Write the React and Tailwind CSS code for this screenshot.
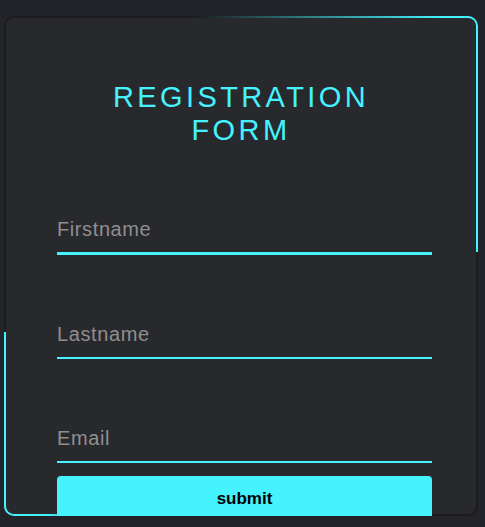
import React from 'react'

const fields = [
  { name: 'firstname', placeholder: 'Firstname', type: 'text', line: 'border-b-[3px] h-[47px]' },
  { name: 'lastname', placeholder: 'Lastname', type: 'text', line: 'border-b-2 h-[46px]' },
  { name: 'email', placeholder: 'Email', type: 'email', line: 'border-b-2 h-[46px]' },
]

const App = () => {
  return (
    <div className="min-h-[527px] bg-[#23242a] pt-[16px] pl-[4px] font-['Liberation_Sans',Arial,sans-serif]">
      <div className="relative w-[474px] h-[500px] rounded-[10px] bg-[#1c1c1c] overflow-hidden p-[2px]">
        {/* animated border beams, frozen */}
        <div className="absolute top-0 right-0 left-[190px] h-[236px] bg-[linear-gradient(90deg,transparent,#45f3ff_88%)]" />
        <div className="absolute bottom-0 left-0 w-[62px] h-[184px] bg-[linear-gradient(90deg,#45f3ff_70%,#33c4cf)]" />

        <form className="relative z-10 h-full rounded-[8px] bg-[#28292d] flex flex-col">
          <h2 className="mt-[63px] text-center text-[29px] leading-[33px] tracking-[3.4px] text-[#45f3ff] font-medium">
            REGISTRATION
            <br />
            FORM
          </h2>

          <div className="pl-[51px] flex flex-col">
            {fields.map((f, i) => (
              <input
                key={f.name}
                type={f.type}
                name={f.name}
                placeholder={f.placeholder}
                className={`w-[375px] ${i === 0 ? 'mt-[61px]' : 'mt-[58px]'} ${f.line} pt-[10px] pb-[11px] leading-[23px] text-[20px] tracking-[0.6px] bg-transparent outline-none border-[#45f3ff] text-white placeholder:text-[#8f8f8f]`}
              />
            ))}
            <button
              type="submit"
              className="mt-[13px] w-[375px] h-[46px] shrink-0 rounded-[4px] bg-[#45f3ff] text-black text-[17px] font-bold"
            >
              submit
            </button>
          </div>
        </form>
      </div>
    </div>
  )
}

export default App
